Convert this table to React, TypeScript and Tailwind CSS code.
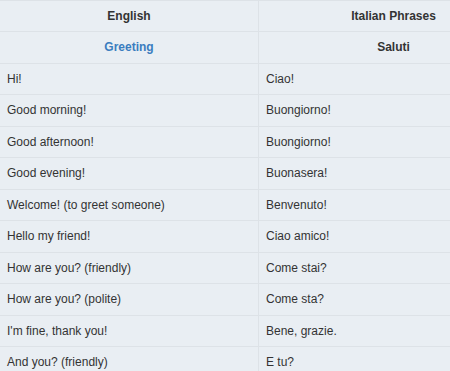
const rows: [string, string][] = [
  ["Hi!", "Ciao!"],
  ["Good morning!", "Buongiorno!"],
  ["Good afternoon!", "Buongiorno!"],
  ["Good evening!", "Buonasera!"],
  ["Welcome! (to greet someone)", "Benvenuto!"],
  ["Hello my friend!", "Ciao amico!"],
  ["How are you? (friendly)", "Come stai?"],
  ["How are you? (polite)", "Come sta?"],
  ["I'm fine, thank you!", "Bene, grazie."],
  ["And you? (friendly)", "E tu?"],
];

function Row({ left, right, className = "" }: { left: React.ReactNode; right: React.ReactNode; className?: string }) {
  return (
    <div className={"flex h-[31.5px] border-b border-[#dde2e7] " + className}>
      <div className="flex w-[259px] shrink-0 items-center border-r border-[#dde2e7] px-[7px]">{left}</div>
      <div className="flex w-[269px] shrink-0 items-center px-[7px]">{right}</div>
    </div>
  );
}

export default function App() {
  return (
    <div className="h-[371px] w-[450px] overflow-hidden bg-[#e9eef3] font-['Liberation_Sans',Arial,sans-serif] text-[12px] text-[#333]">
      <div className="w-[528px] border-t border-[#dde2e7]">
        <Row
          className="h-[31px] font-bold"
          left={<span className="w-full text-center">English</span>}
          right={<span className="w-full text-center">Italian Phrases</span>}
        />
        <Row
          className="font-bold"
          left={<span className="w-full text-center text-[#3b7dbf]">Greeting</span>}
          right={<span className="w-full text-center">Saluti</span>}
        />
        {rows.map(([en, it]) => (
          <Row key={en} left={en} right={it} />
        ))}
      </div>
    </div>
  );
}
